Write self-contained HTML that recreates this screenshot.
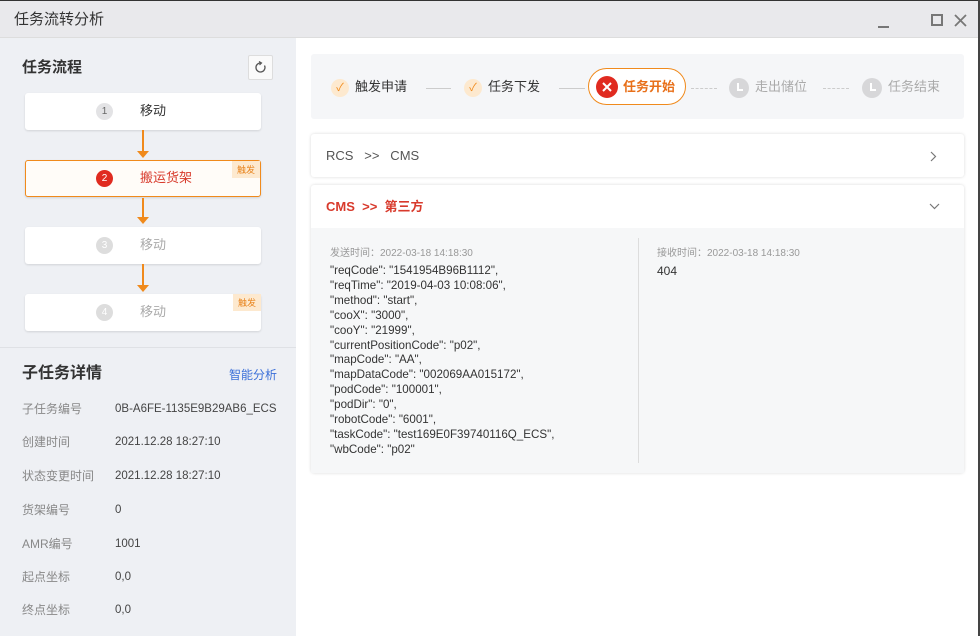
<!DOCTYPE html>
<html><head><meta charset="utf-8"><style>
*{margin:0;padding:0;box-sizing:border-box}
body{width:980px;height:636px;overflow:hidden;font-family:"Liberation Sans","Noto Sans CJK SC",sans-serif;background:#fff;position:relative;color:#333}
.a{position:absolute}
.title{left:0;top:0;width:980px;height:38px;background:#e9e9ec;border-top:1px solid #333;border-bottom:1px solid #ddd}
.left{left:0;top:38px;width:296px;height:598px;background:#eef0f4}
.card{position:absolute;left:25px;width:236px;height:37px;background:#fff;border-radius:3px;box-shadow:0 1px 2px rgba(0,0,0,.12);font-size:13px}
.card .n{position:absolute;left:71px;top:10px;width:17px;height:17px;border-radius:50%;background:#e3e3e5;color:#666;font-size:10px;text-align:center;line-height:17px}
.card .t{position:absolute;left:115px;top:9px;line-height:18px}
.tag{position:absolute;right:0;top:0;background:#fde9cf;color:#e8841e;font-size:9px;padding:2px 5px}
.arr{position:absolute;left:142px;width:2px;background:#f08a1c}
.arr:after{content:"";position:absolute;left:-5px;bottom:-4px;border:6px solid transparent;border-top:7px solid #f08a1c;border-bottom:0}
.row{position:absolute;left:22px;font-size:12px;color:#888;line-height:16px}
.row span{position:absolute;left:93px;top:0;color:#444;white-space:nowrap;font-size:11.5px}
.step{position:absolute;font-size:13px;color:#333;line-height:20px}
.ck{display:inline-block;width:18px;height:18px;border-radius:50%;background:#fde9cf;color:#f08a1c;text-align:center;line-height:18px;font-size:11px;vertical-align:middle;margin-right:6px}
.gc{display:inline-block;width:20px;height:20px;border-radius:50%;background:#d7d7d9;vertical-align:middle;margin-right:6px;position:relative}
.gc:after{content:"";position:absolute;left:8px;top:5px;width:4px;height:6px;border-left:2px solid #fff;border-bottom:2px solid #fff}
.line{position:absolute;top:88px;height:0;border-top:1px solid #ccc}
.dash{border-top:1px dashed #ccc}
.code{left:330px;top:264px;font-size:11.6px;line-height:14.9px;color:#333;white-space:pre}
</style></head><body>
<div class="a title"><div class="a" style="left:14px;top:9px;font-size:15px;color:#333;line-height:20px">任务流转分析</div>
<div class="a" style="left:878px;top:25px;width:11px;height:1.5px;background:#777"></div>
<div class="a" style="left:931px;top:13px;width:12px;height:12px;border:2px solid #777"></div>
<svg class="a" style="left:954px;top:13px" width="13" height="13"><path d="M1 1L12 12M12 1L1 12" stroke="#777" stroke-width="1.8"/></svg></div>
<div class="a left"></div>
<div class="a" style="left:22px;top:58px;font-size:15px;font-weight:bold;color:#333;line-height:20px">任务流程</div>
<div class="a" style="left:248px;top:55px;width:25px;height:25px;background:#fafafa;border:1px solid #ddd;border-radius:2px"></div>
<svg class="a" style="left:254px;top:61px" width="13" height="13"><path d="M6.5 2A4.5 4.5 0 1 0 10.5 4.5" fill="none" stroke="#555" stroke-width="1.3"/><path d="M5 0.5L7.5 2L5.5 4" fill="none" stroke="#555" stroke-width="1.2"/></svg>
<div class="card" style="top:93px"><div class="n">1</div><div class="t">移动</div></div>
<div class="arr" style="top:130px;height:24px"></div>
<div class="card" style="top:160px;border:1px solid #f08a1c;background:#fffcf8"><div class="n" style="background:#e02b20;color:#fff;left:70px;top:9px">2</div><div class="t" style="color:#d83a2c;left:114px;top:8px">搬运货架</div><div class="tag">触发</div></div>
<div class="arr" style="top:198px;height:22px"></div>
<div class="card" style="top:227px"><div class="n" style="background:#ddd;color:#fff">3</div><div class="t" style="color:#aaa">移动</div></div>
<div class="arr" style="top:264px;height:24px"></div>
<div class="card" style="top:294px"><div class="n" style="background:#ddd;color:#fff">4</div><div class="t" style="color:#aaa">移动</div><div class="tag">触发</div></div>
<div class="a" style="left:0;top:347px;width:296px;height:1px;background:#dfe1e5"></div>
<div class="a" style="left:22px;top:364px;font-size:16px;font-weight:bold;color:#333;line-height:20px">子任务详情</div>
<div class="a" style="left:229px;top:367px;font-size:12px;color:#3a6fd8;line-height:16px">智能分析</div>
<div class="row" style="top:401px">子任务编号<span>0B-A6FE-1135E9B29AB6_ECS</span></div>
<div class="row" style="top:434px">创建时间<span>2021.12.28 18:27:10</span></div>
<div class="row" style="top:468px">状态变更时间<span>2021.12.28 18:27:10</span></div>
<div class="row" style="top:502px">货架编号<span>0</span></div>
<div class="row" style="top:536px">AMR编号<span>1001</span></div>
<div class="row" style="top:569px">起点坐标<span>0,0</span></div>
<div class="row" style="top:602px">终点坐标<span>0,0</span></div>
<div class="a" style="left:978px;top:0;width:2px;height:636px;background:#444"></div>

<div class="a" style="left:311px;top:54px;width:653px;height:65px;background:#f5f6f8;border-radius:3px"></div>
<div class="step" style="left:331px;top:77px"><span class="ck">✓</span>触发申请</div>
<div class="line" style="left:426px;width:25px"></div>
<div class="step" style="left:464px;top:77px"><span class="ck">✓</span>任务下发</div>
<div class="line" style="left:559px;width:26px"></div>
<div class="a" style="left:588px;top:68px;width:98px;height:37px;border:1.5px solid #f08a1c;border-radius:19px;background:#fff"></div>
<div class="a" style="left:596px;top:76px;width:22px;height:22px;border-radius:50%;background:#e02b20"></div>
<svg class="a" style="left:602px;top:82px" width="10" height="10"><path d="M1 1L9 9M9 1L1 9" stroke="#fff" stroke-width="2"/></svg>
<div class="a" style="left:623px;top:77px;font-size:13px;font-weight:bold;color:#e8701a;line-height:20px">任务开始</div>
<div class="line dash" style="left:691px;width:26px"></div>
<div class="step" style="left:729px;top:77px;color:#aaa"><span class="gc"></span>走出储位</div>
<div class="line dash" style="left:823px;width:26px"></div>
<div class="step" style="left:862px;top:77px;color:#aaa"><span class="gc"></span>任务结束</div>

<div class="a" style="left:311px;top:134px;width:653px;height:43px;background:#fff;border-radius:3px;box-shadow:0 0 3px rgba(0,0,0,.15)"></div>
<div class="a" style="left:326px;top:148px;font-size:13px;color:#555">RCS &nbsp;&nbsp;&gt;&gt;&nbsp;&nbsp; CMS</div>
<svg class="a" style="left:930px;top:151px" width="7" height="11"><path d="M1 1L5.5 5.5L1 10" fill="none" stroke="#777" stroke-width="1.2"/></svg>
<div class="a" style="left:311px;top:185px;width:653px;height:288px;background:#fff;border-radius:3px;box-shadow:0 0 3px rgba(0,0,0,.15)"></div>
<div class="a" style="left:326px;top:197px;font-size:13px;font-weight:bold;color:#d83a2c;line-height:20px">CMS &nbsp;&gt;&gt;&nbsp; 第三方</div>
<svg class="a" style="left:929px;top:203px" width="11" height="7"><path d="M1 1L5.5 5.5L10 1" fill="none" stroke="#777" stroke-width="1.2"/></svg>
<div class="a" style="left:311px;top:228px;width:653px;height:245px;background:#f6f7f8"></div>
<div class="a" style="left:638px;top:238px;width:1px;height:225px;background:#ddd"></div>
<div class="a" style="left:330px;top:244px;font-size:10px;color:#999">发送时间：2022-03-18 14:18:30</div>
<div class="a" style="left:657px;top:244px;font-size:10px;color:#999">接收时间：2022-03-18 14:18:30</div>
<div class="a" style="left:657px;top:264px;font-size:12px;color:#333">404</div>
<div class="a code">"reqCode": "1541954B96B1112",
"reqTime": "2019-04-03 10:08:06",
"method": "start",
"cooX": "3000",
"cooY": "21999",
"currentPositionCode": "p02",
"mapCode": "AA",
"mapDataCode": "002069AA015172",
"podCode": "100001",
"podDir": "0",
"robotCode": "6001",
"taskCode": "test169E0F39740116Q_ECS",
"wbCode": "p02"</div>
</body></html>
